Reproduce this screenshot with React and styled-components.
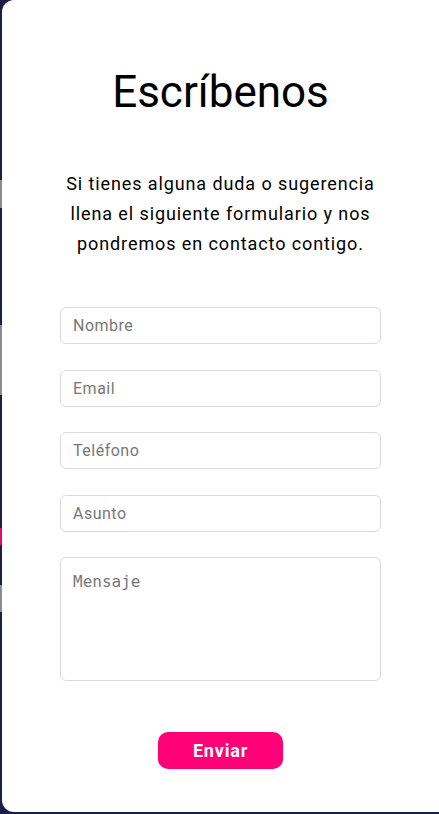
import React from "react";
import { useState } from "react";
import styled, { createGlobalStyle } from "styled-components";

const GlobalStyle = createGlobalStyle`
  html, body {
    margin: 0;
    padding: 0;
    background: #1b1f48;
  }
`;

// página detrás del modal (solo se ve una franja a la izquierda)
const Backdrop = styled.div`
  width: 439px;
  height: 814px;
  box-sizing: border-box;
  padding: 0 0 2px 2px;
  background: linear-gradient(
    to bottom,
    #1b1f48 0px,
    #1b1f48 180px,
    #8a8a8a 180px,
    #8a8a8a 208px,
    #1b1f48 208px,
    #1b1f48 325px,
    #8c8c8c 325px,
    #8c8c8c 395px,
    #1b1f48 395px,
    #1b1f48 528px,
    #e0106a 528px,
    #e0106a 545px,
    #1b1f48 545px,
    #1b1f48 585px,
    #8c8c8c 585px,
    #8c8c8c 612px,
    #1b1f48 612px
  );
  overflow: hidden;
`;

const Card = styled.div`
  width: 449px;
  height: 812px;
  background: #fff;
  border-radius: 12px;
  box-sizing: border-box;
  padding: 66px 12px 0 0;
  display: flex;
  flex-direction: column;
  align-items: center;
`;

const Content = styled.div`
  width: 437px;
  display: flex;
  flex-direction: column;
  align-items: center;
`;

const Title = styled.h1`
  margin: 0;
  color: #000;
  font-family: Roboto, sans-serif;
  font-size: 44px;
  font-weight: 400;
  line-height: 52px;
`;

const Description = styled.p`
  margin: 51px 0 0;
  color: #000;
  font-family: Roboto, sans-serif;
  font-size: 18px;
  font-weight: 400;
  line-height: 30px;
  letter-spacing: 0.9px;
  text-align: center;
`;

const Form = styled.form`
  width: 321px;
  margin-top: 48px;
  display: flex;
  flex-direction: column;
  align-items: center;
  gap: 25.5px;
`;

const Field = styled.input`
  width: 100%;
  height: 37px;
  box-sizing: border-box;
  border: 1px solid #dadada;
  border-radius: 6px;
  padding: 0 12px;
  font-family: Roboto, sans-serif;
  font-size: 16px;
  letter-spacing: 0.5px;
  color: #333;
  outline: none;

  &::placeholder {
    color: #777;
  }
`;

const Message = styled.textarea`
  width: 100%;
  height: 124px;
  box-sizing: border-box;
  border: 1px solid #dadada;
  border-radius: 6px;
  padding: 14px 12px;
  font-family: "DejaVu Sans Mono", monospace;
  font-size: 16px;
  resize: none;
  outline: none;

  &::placeholder {
    color: #777;
  }
`;

const SendButton = styled.button`
  width: 125px;
  height: 37px;
  margin-top: 25.5px;
  border: none;
  border-radius: 10px;
  background: #ff0077;
  color: #fff;
  font-family: Roboto, sans-serif;
  font-size: 18px;
  font-weight: 700;
  letter-spacing: 0.8px;
  cursor: pointer;
`;

export default function App() {
  const [form, setForm] = useState({
    nombre: "",
    email: "",
    telefono: "",
    asunto: "",
    mensaje: "",
  });

  const update = (key) => (e) => setForm({ ...form, [key]: e.target.value });

  return (
    <>
      <GlobalStyle />
      <Backdrop>
        <Card>
          <Content>
            <Title>Escríbenos</Title>
            <Description>
              Si tienes alguna duda o sugerencia
              <br />
              llena el siguiente formulario y nos
              <br />
              pondremos en contacto contigo.
            </Description>
            <Form onSubmit={(e) => e.preventDefault()}>
              <Field placeholder="Nombre" value={form.nombre} onChange={update("nombre")} />
              <Field type="email" placeholder="Email" value={form.email} onChange={update("email")} />
              <Field placeholder="Teléfono" value={form.telefono} onChange={update("telefono")} />
              <Field placeholder="Asunto" value={form.asunto} onChange={update("asunto")} />
              <Message placeholder="Mensaje" value={form.mensaje} onChange={update("mensaje")} />
              <SendButton type="submit">Enviar</SendButton>
            </Form>
          </Content>
        </Card>
      </Backdrop>
    </>
  );
}
